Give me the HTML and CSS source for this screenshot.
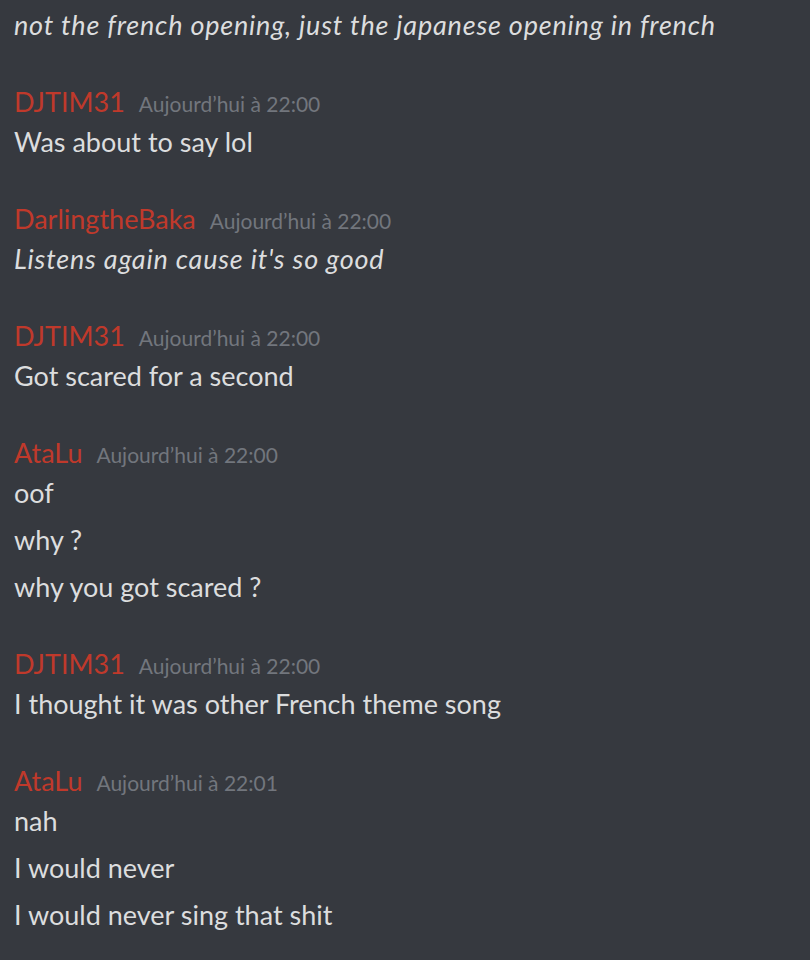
FILE: index.html
```html
<!DOCTYPE html>
<html>
<head>
<meta charset="utf-8">
<link rel="stylesheet" href="styles.css">
</head>
<body>
<div class="chat">
  <div class="msg em">not the french opening, just the japanese opening in french</div>

  <div class="group">
    <div class="header"><span class="user">DJTIM31</span><span class="time">Aujourd’hui à 22:00</span></div>
    <div class="msg">Was about to say lol</div>
  </div>

  <div class="group">
    <div class="header"><span class="user">DarlingtheBaka</span><span class="time">Aujourd’hui à 22:00</span></div>
    <div class="msg em">Listens again cause it's so good</div>
  </div>

  <div class="group">
    <div class="header"><span class="user">DJTIM31</span><span class="time">Aujourd’hui à 22:00</span></div>
    <div class="msg">Got scared for a second</div>
  </div>

  <div class="group">
    <div class="header"><span class="user">AtaLu</span><span class="time">Aujourd’hui à 22:00</span></div>
    <div class="msg">oof</div>
    <div class="msg cont">why ?</div>
    <div class="msg cont">why you got scared ?</div>
  </div>

  <div class="group">
    <div class="header"><span class="user">DJTIM31</span><span class="time">Aujourd’hui à 22:00</span></div>
    <div class="msg">I thought it was other French theme song</div>
  </div>

  <div class="group">
    <div class="header"><span class="user">AtaLu</span><span class="time">Aujourd’hui à 22:01</span></div>
    <div class="msg">nah</div>
    <div class="msg cont">I would never</div>
    <div class="msg cont">I would never sing that shit</div>
  </div>
</div>
</body>
</html>
```

FILE: styles.css
```css
html, body {
  margin: 0;
  padding: 0;
  background: #36393f;
}
body {
  font-family: Lato, "Open Sans", sans-serif;
  color: #dcddde;
  width: 810px;
  height: 960px;
  overflow: hidden;
}
.chat {
  padding: 4px 14px 0 14px;
}
.group {
  margin-top: 37px;
}
.header {
  height: 38px;
  line-height: 38px;
  display: flex;
  align-items: baseline;
  white-space: nowrap;
}
.user {
  color: #c0392b;
  font-size: 27px;
}
.time {
  color: #72767d;
  font-size: 21px;
  margin-left: 14px;
}
.msg {
  font-size: 27px;
  line-height: 42px;
  white-space: nowrap;
}
.msg.cont {
  margin-top: 5px;
}
.em {
  font-style: italic;
  letter-spacing: 0.8px;
}
```
